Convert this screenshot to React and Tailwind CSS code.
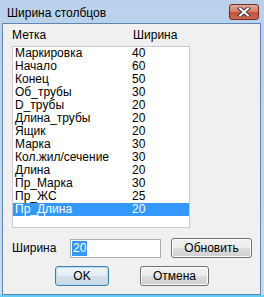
const rows = [
  ["Маркировка", "40"],
  ["Начало", "60"],
  ["Конец", "50"],
  ["Об_трубы", "30"],
  ["D_трубы", "20"],
  ["Длина_трубы", "20"],
  ["Ящик", "20"],
  ["Марка", "30"],
  ["Кол.жил/сечение", "30"],
  ["Длина", "20"],
  ["Пр_Марка", "30"],
  ["Пр_ЖС", "25"],
  ["Пр_Длина", "20"],
];

const CloseIcon = () => (
  <svg width="14" height="10" viewBox="0 0 14 10">
    <path
      d="M3 1.5 L11 8.5 M11 1.5 L3 8.5"
      stroke="#3a3a3a"
      strokeWidth="4"
      strokeLinecap="square"
    />
    <path
      d="M3 1.5 L11 8.5 M11 1.5 L3 8.5"
      stroke="#ffffff"
      strokeWidth="2"
      strokeLinecap="square"
    />
  </svg>
);

const Button = ({ children, className = "", primary }) => (
  <div
    className={
      "h-[20px] flex items-center justify-center rounded-[3px] border text-black " +
      (primary
        ? "border-[#3c7fb1] bg-[linear-gradient(#edf4f9_0%,#e3edf4_50%,#d3e0ea_51%,#c9d8e4_100%)] shadow-[inset_0_0_0_1px_#b8dcf2] "
        : "border-[#707070] bg-[linear-gradient(#f2f2f2_0%,#ebebeb_50%,#dddddd_51%,#cfcfcf_100%)] shadow-[inset_0_0_0_1px_#fcfcfc] ") +
      className
    }
  >
    {children}
  </div>
);

export default function App() {
  return (
    <div className="w-[264px] h-[297px] flex flex-col overflow-hidden border-b-[2px] border-[#5fcff5] bg-[linear-gradient(#b9d1ea,#c6dcf2)] font-['Liberation_Sans',Arial,sans-serif] text-[12px] leading-[14px] text-black">
      {/* title bar */}
      <div className="h-[23px] flex items-start pl-[7px] pr-[5px] shrink-0">
        <span className="mt-[6px]">Ширина столбцов</span>
        <div className="ml-auto mt-[4px] w-[30px] h-[16px] rounded-[3px] border border-[#6b2a24] bg-[linear-gradient(#e4a898_0%,#d87f6b_45%,#c75039_55%,#d2694f_100%)] flex items-center justify-center">
          <CloseIcon />
        </div>
      </div>

      {/* client */}
      <div className="flex-1 ml-[2px] mr-[3px] border border-[#5f86b3] bg-[#f0f0f0] flex flex-col">
        <div className="flex pl-[9px] mt-[4px] h-[14px]">
          <span className="w-[121px]">Метка</span>
          <span>Ширина</span>
        </div>

        <div className="mt-[4px] ml-[9px] w-[178px] h-[182px] border border-[#c9cbd0] bg-white">
          {rows.map(([name, width], i) => (
            <div
              key={name}
              className={
                "h-[13px] flex items-center pl-[2px] leading-[13px] " +
                (i === rows.length - 1 ? "bg-[#3399ff] text-white" : "")
              }
            >
              <span className="w-[117px]">{name}</span>
              <span>{width}</span>
            </div>
          ))}
        </div>

        <div className="mt-[10px] flex items-center h-[20px] pl-[9px]">
          <span className="w-[58px]">Ширина</span>
          <div className="w-[91px] h-[19px] border border-[#abadb3] bg-white flex items-center pl-[1px]">
            <span className="bg-[#3399ff] text-white px-[1px] leading-[15px]">20</span>
          </div>
          <Button className="ml-[10px] w-[81px]">Обновить</Button>
        </div>

        <div className="mt-[8px] flex pl-[52px] gap-[31px]">
          <Button primary className="w-[54px]">OK</Button>
          <Button className="w-[69px]">Отмена</Button>
        </div>
      </div>
    </div>
  );
}
